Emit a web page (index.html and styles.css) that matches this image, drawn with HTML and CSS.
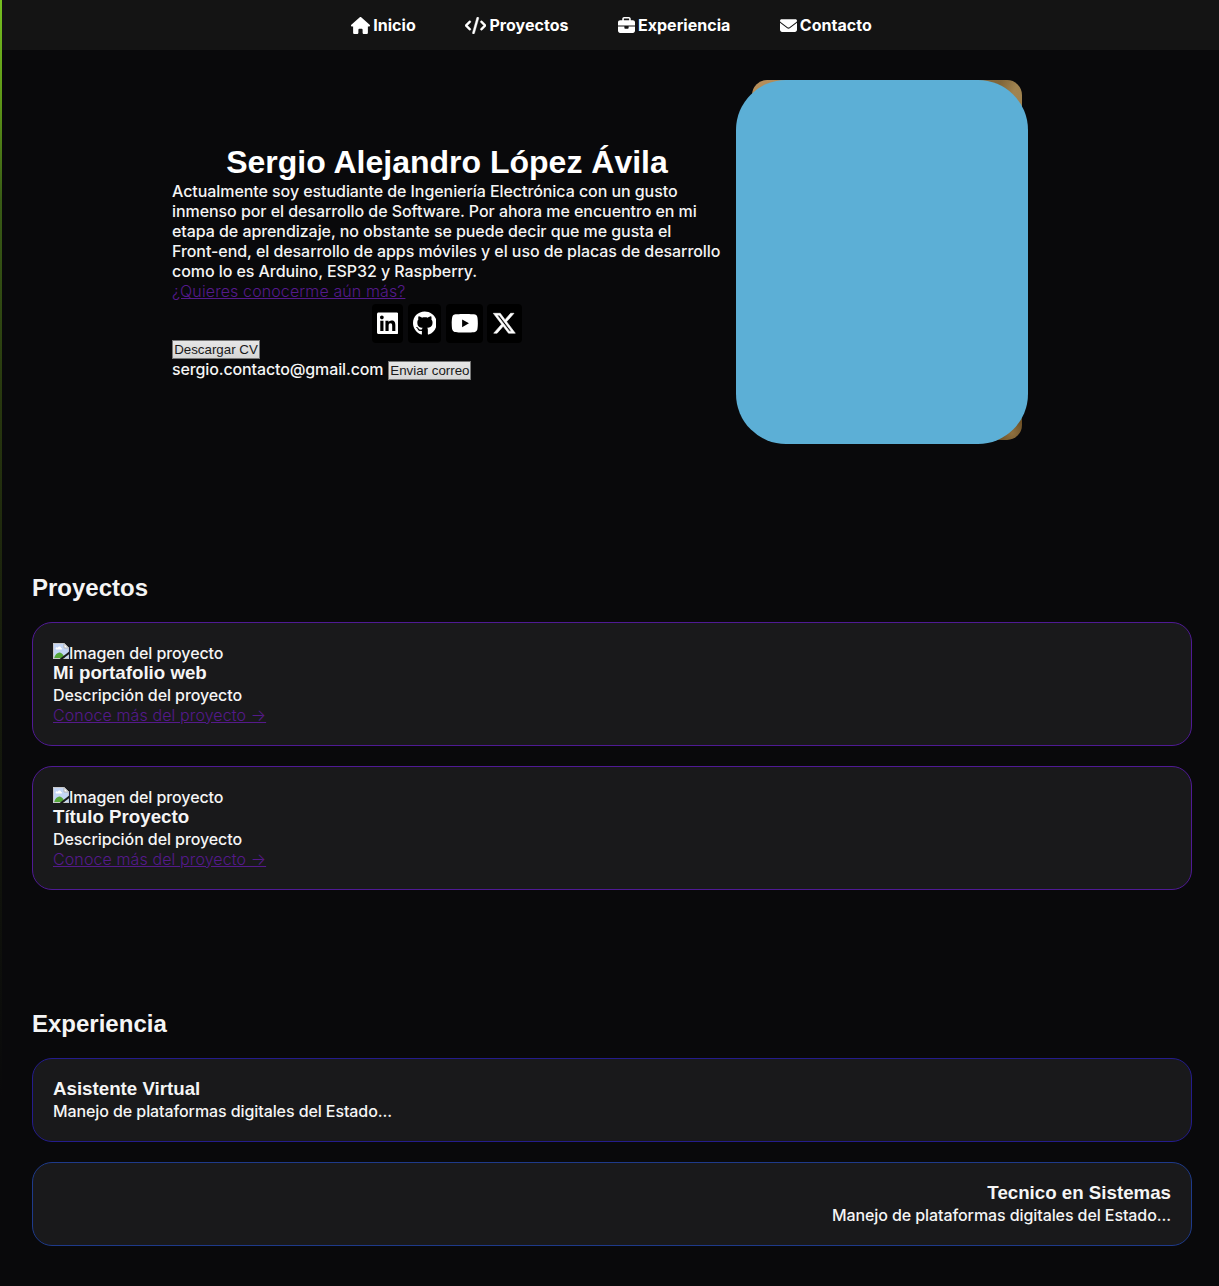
FILE: index.html
```html
<!DOCTYPE html>
<html lang="es">
<head>
<meta charset="utf-8">
<title>Sergio Alejandro López Ávila</title>
<link rel="stylesheet" href="styles.css">
</head>
<body>
<svg class="sprite" aria-hidden="true">
  <symbol id="broken" viewBox="0 0 16 16">
    <path fill="#c3d5f5" d="M0 0h11l5 5v11H0z"/>
    <path fill="#fff" d="M3 6.500c-1.500-2 1-3 1.800-1.800C5.500 2.500 8.500 3.500 8 5c1.500 0 1.500 1.500.5 1.500z"/>
    <path fill="#55a63a" d="M1 15.500c1-4.500 4-6.500 6-6 2 .3 4 3 5 6z"/>
    <path fill="none" stroke="#c8c8c8" d="M.5 15.500V.5H11L15.500 5v10.500z"/>
    <path fill="#fff" stroke="#b5b5b5" d="M11 .5V5h4.500z"/>
    <path stroke="#19191b" stroke-width="2" d="M7.500 16.500l9-7"/>
  </symbol>
</svg>
<div class="page">
  <nav class="nav">
    <a class="nav-link" href="#inicio"><svg class="icon house" viewBox="0 0 576 512"><path d="M575.800 255.500c0 18-15 32.100-32 32.100h-32l.7 160.200c0 2.700-.2 5.400-.5 8.100V472c0 22.100-17.900 40-40 40H456c-1.100 0-2.200 0-3.300-.1c-1.400 .1-2.800 .1-4.200 .1H416 392c-22.100 0-40-17.900-40-40V448 384c0-17.700-14.300-32-32-32H256c-17.700 0-32 14.300-32 32v64 24c0 22.100-17.900 40-40 40H160 128.100c-1.500 0-3-.1-4.500-.2c-1.200 .1-2.400 .2-3.600 .2H104c-22.100 0-40-17.900-40-40V360c0-.9 0-1.900 .1-2.800V287.600H32c-18 0-32-14-32-32.100c0-9 3-17 10-24L266.400 8c7-7 15-8 22-8s15 2 21 7L564.800 231.500c8 7 12 15 11 24z"/></svg>Inicio</a>
    <a class="nav-link" href="#proyectos"><svg class="icon code" viewBox="0 0 640 512"><path d="M392.800 1.200c-17-4.900-34.700 5-39.600 22l-128 448c-4.900 17 5 34.700 22 39.600s34.700-5 39.600-22l128-448c4.900-17-5-34.700-22-39.600zm80.600 120.100c-12.500 12.500-12.500 32.800 0 45.300L562.700 256l-89.400 89.400c-12.500 12.500-12.500 32.800 0 45.300s32.800 12.500 45.300 0l112-112c12.500-12.500 12.500-32.800 0-45.300l-112-112c-12.500-12.500-32.800-12.500-45.300 0zm-306.700 0c-12.500-12.500-32.800-12.500-45.300 0l-112 112c-12.500 12.500-12.500 32.800 0 45.300l112 112c12.500 12.500 32.800 12.500 45.300 0s12.500-32.800 0-45.300L77.300 256l89.400-89.400c12.500-12.500 12.500-32.800 0-45.300z"/></svg>Proyectos</a>
    <a class="nav-link" href="#experiencia"><svg class="icon square" viewBox="0 0 512 512"><path d="M184 48H328c4.400 0 8 3.600 8 8V96H176V56c0-4.400 3.600-8 8-8zm-56 8V96H64C28.700 96 0 124.700 0 160v96H192 320 512V160c0-35.300-28.700-64-64-64H384V56c0-30.900-25.100-56-56-56H184c-30.900 0-56 25.100-56 56zM512 288H320v32c0 17.700-14.300 32-32 32H224c-17.700 0-32-14.300-32-32V288H0V416c0 35.300 28.700 64 64 64H448c35.300 0 64-28.700 64-64V288z"/></svg>Experiencia</a>
    <a class="nav-link" href="#contacto"><svg class="icon square" viewBox="0 0 512 512"><path d="M48 64C21.500 64 0 85.500 0 112c0 15.100 7.100 29.300 19.200 38.400L236.800 313.600c11.400 8.500 27 8.500 38.400 0L492.800 150.400c12.100-9.100 19.200-23.300 19.200-38.400c0-26.500-21.500-48-48-48H48zM0 176V384c0 35.300 28.700 64 64 64H448c35.300 0 64-28.700 64-64V176L294.400 339.200c-22.800 17.100-54 17.100-76.800 0L0 176z"/></svg>Contacto</a>
  </nav>

  <header class="hero" id="inicio">
    <div class="intro">
      <h1>Sergio Alejandro López Ávila</h1>
      <p>Actualmente soy estudiante de Ingeniería Electrónica con un gusto inmenso por el desarrollo de Software. Por ahora me encuentro en mi etapa de aprendizaje, no obstante se puede decir que me gusta el <span class="nowrap">Front-end</span>, el desarrollo de apps móviles y el uso de placas de desarrollo como lo es Arduino, ESP32 y Raspberry.</p>
      <a class="more" href="#inicio">¿Quieres conocerme aún más?</a>
      <div class="social">
        <a href="#inicio" aria-label="LinkedIn"><svg class="linkedin" viewBox="0 0 448 512"><path d="M416 32H31.900C14.300 32 0 46.500 0 64.300v383.400C0 465.500 14.300 480 31.900 480H416c17.600 0 32-14.500 32-32.300V64.300c0-17.800-14.400-32.300-32-32.300zM135.400 416H69V202.200h66.500V416zm-33.200-243c-21.300 0-38.500-17.300-38.500-38.500S80.900 96 102.200 96c21.200 0 38.500 17.300 38.500 38.500 0 21.300-17.200 38.500-38.500 38.500zm282.100 243h-66.400V312c0-24.800-.5-56.700-34.500-56.700-34.600 0-39.900 27-39.900 54.900V416h-66.400V202.200h63.700v29.200h.9c8.900-16.800 30.600-34.500 62.900-34.500 67.200 0 79.700 44.300 79.700 101.900V416z"/></svg></a>
        <a href="#inicio" aria-label="GitHub"><svg class="github" viewBox="0 0 496 512"><path d="M165.900 397.400c0 2-2.300 3.600-5.200 3.600-3.300.3-5.600-1.300-5.600-3.600 0-2 2.300-3.600 5.200-3.600 3-.3 5.600 1.300 5.600 3.600zm-31.100-4.500c-.7 2 1.300 4.300 4.300 4.900 2.600 1 5.600 0 6.200-2s-1.300-4.300-4.300-5.200c-2.600-.7-5.500.3-6.200 2.300zm44.200-1.700c-2.900.7-4.900 2.600-4.600 4.900.3 2 2.900 3.300 5.900 2.600 2.900-.7 4.900-2.600 4.600-4.600-.3-1.900-3-3.200-5.900-2.900zM244.800 8C106.100 8 0 113.300 0 252c0 110.900 69.800 205.800 169.500 239.200 12.800 2.300 17.300-5.600 17.300-12.100 0-6.200-.3-40.400-.3-61.400 0 0-70 15-84.700-29.800 0 0-11.400-29.100-27.800-36.600 0 0-22.900-15.700 1.600-15.400 0 0 24.900 2 38.600 25.800 21.900 38.600 58.600 27.500 72.900 20.900 2.300-16 8.800-27.100 16-33.700-55.900-6.200-112.300-14.300-112.300-110.500 0-27.500 7.600-41.300 23.600-58.900-2.600-6.500-11.100-33.300 2.600-67.900 20.900-6.500 69 27 69 27 20-5.600 41.500-8.500 62.800-8.500s42.800 2.900 62.800 8.500c0 0 48.100-33.600 69-27 13.700 34.700 5.200 61.400 2.600 67.900 16 17.700 25.800 31.500 25.800 58.900 0 96.500-58.900 104.200-114.800 110.500 9.200 7.900 17 22.900 17 46.400 0 33.700-.3 75.400-.3 83.600 0 6.500 4.600 14.400 17.300 12.100C428.200 457.800 496 362.900 496 252 496 113.300 383.500 8 244.800 8z"/></svg></a>
        <a href="#inicio" aria-label="YouTube"><svg class="youtube" viewBox="0 0 576 512"><path d="M549.655 124.083c-6.281-23.650-24.787-42.276-48.284-48.597C458.781 64 288 64 288 64S117.220 64 74.629 75.486c-23.497 6.322-42.003 24.947-48.284 48.597-11.412 42.867-11.412 132.305-11.412 132.305s0 89.438 11.412 132.305c6.281 23.650 24.787 41.500 48.284 47.821C117.220 448 288 448 288 448s170.780 0 213.371-11.486c23.497-6.321 42.003-24.171 48.284-47.821 11.412-42.867 11.412-132.305 11.412-132.305s0-89.438-11.412-132.305zm-317.510 213.508V175.185l142.739 81.205-142.739 81.201z"/></svg></a>
        <a href="#inicio" aria-label="X"><svg class="x" viewBox="0 0 512 512"><path d="M389.200 48h70.600L305.600 224.200 487 464H345L233.700 318.600 106.500 464H35.800L200.700 275.500 26.800 48H172.400L272.900 180.900 389.200 48zM364.400 421.800h39.100L151.100 88h-42L364.400 421.800z"/></svg></a>
      </div>
      <div class="cv"><button class="btn wide">Descargar CV</button></div>
      <div class="mail"><span>sergio.contacto@gmail.com</span><button class="btn">Enviar correo</button></div>
    </div>
    <div class="portrait"><div class="photo"></div><div class="cover"></div></div>
  </header>

  <section class="projects" id="proyectos">
    <h2>Proyectos</h2>
    <article class="card purple">
      <div class="missing"><svg viewBox="0 0 16 16"><use href="#broken"/></svg>Imagen del proyecto</div>
      <h3>Mi portafolio web</h3>
      <p>Descripción del proyecto</p>
      <a class="more" href="#proyectos">Conoce más del proyecto →</a>
    </article>
    <article class="card purple">
      <div class="missing"><svg viewBox="0 0 16 16"><use href="#broken"/></svg>Imagen del proyecto</div>
      <h3>Título Proyecto</h3>
      <p>Descripción del proyecto</p>
      <a class="more" href="#proyectos">Conoce más del proyecto →</a>
    </article>
  </section>

  <section class="experience" id="experiencia">
    <h2>Experiencia</h2>
    <article class="card indigo">
      <h3>Asistente Virtual</h3>
      <p>Manejo de plataformas digitales del Estado...</p>
    </article>
    <article class="card blue right">
      <h3>Tecnico en Sistemas</h3>
      <p>Manejo de plataformas digitales del Estado...</p>
    </article>
  </section>
</div>
</body>
</html>
```
FILE: styles.css
```css
* { box-sizing: border-box; margin: 0; padding: 0; }

body {
  min-height: 1286px;
  padding-left: 2px;
  overflow: hidden;
  color: #f5f5f5;
  font: 500 16px/20px Inter, "Liberation Sans", sans-serif;
  letter-spacing: -0.090px;
  background:
    linear-gradient(#76c020, #5e9618 100px, #395c16 200px, #28380f 400px, #181d0d 650px, #09090b 1100px) 0 0 / 2px 100% no-repeat,
    #09090b;
}

.sprite { display: none; }

.nav {
  display: flex;
  justify-content: center;
  align-items: center;
  gap: 49.500px;
  height: 50px;
  padding-left: 2px;
  background: #141414;
}
.nav-link {
  display: flex;
  align-items: center;
  gap: 3px;
  color: #fff;
  font-weight: 700;
  letter-spacing: 0.020px;
  text-decoration: none;
}
.icon { height: 17px; fill: currentColor; }
.house { width: 19px; }
.code { width: 21.250px; stroke: currentColor; stroke-width: 12; }
.square { width: 17px; }

.hero {
  display: flex;
  gap: 14px;
  height: 364px;
  margin: 30px 0 0 170px;
}
.intro { width: 550px; padding-top: 63px; }
.intro p { margin-right: -4px; letter-spacing: -0.065px; }
.nowrap { white-space: nowrap; }
h1, h2, h3 {
  font-family: "Liberation Sans", Arial, sans-serif;
  font-weight: 700;
  letter-spacing: 0;
}
h1 {
  color: #fff;
  font-size: 32px;
  line-height: 38px;
  text-align: center;
}
.more {
  display: block;
  width: max-content;
  color: #551a8b;
  font-weight: 300;
  letter-spacing: 0.110px;
  text-decoration: underline;
}
.social {
  display: flex;
  justify-content: center;
  gap: 4.400px;
  height: 39px;
  margin-top: 3px;
}
.social a {
  display: flex;
  align-items: center;
  padding: 0 5px;
  border-radius: 4px;
  background: #000;
}
.social svg { height: 24.500px; fill: #fff; }
.linkedin { width: 21.400px; }
.github { width: 23.700px; }
.youtube { width: 27.600px; }
.x { width: 24.500px; stroke: #fff; stroke-width: 12; }
.social a:last-child { margin-left: -1px; padding-right: 6px; }
.cv { display: flex; margin-top: -3px; }
.mail { display: flex; gap: 5px; letter-spacing: -0.130px; }
.btn {
  width: 83px;
  height: 19px;
  border: 1px solid #767676;
  background: linear-gradient(#e6e6e6, #d6d6d6);
  color: #1a1a1a;
  font: 400 13.333px/16px "Liberation Sans", Arial, sans-serif;
  letter-spacing: 0;
  white-space: nowrap;
}
.btn.wide { width: 88px; }
.mail .btn { margin-top: 2px; }

.portrait { display: grid; width: 292px; height: 364px; }
.photo, .cover { grid-area: 1 / 1; }
.photo {
  width: 270px;
  height: 360px;
  margin-left: 16px;
  border-radius: 15px;
  background:
    radial-gradient(circle at 0 100%, #09090b 60px, transparent 80px),
    radial-gradient(circle at 260px 353px, #8f7140, #65481f 18px, transparent 40px),
    linear-gradient(115deg, #b8905c, #806539 57%, #a08350 61%, #8e7140);
}
.cover { z-index: 1; border-radius: 50px; background: #5cafd6; }

.projects { margin: 129px 27px 0 30px; }
.experience { margin: 119px 27px 0 30px; }
h2 {
  margin-bottom: 20px;
  font-size: 24px;
  line-height: 29px;
}
.card {
  margin-bottom: 20px;
  padding: 20px;
  border: 1px solid;
  border-radius: 20px;
  background: #19191b;
}
.purple { border-color: #4f1a94; }
.indigo { border-color: #241c8c; }
.blue { border-color: #1e3a8a; }
.right { text-align: right; }
h3 { padding-bottom: 2px; font-size: 18.720px; line-height: 20px; }
.missing { display: flex; }
.missing svg { width: 16px; height: 16px; }
```
